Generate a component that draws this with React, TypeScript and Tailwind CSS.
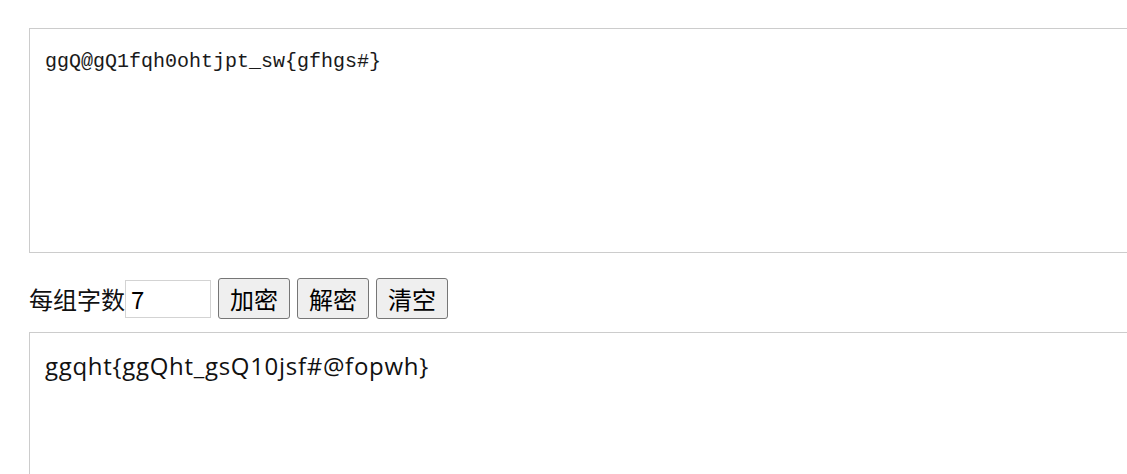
import React from 'react'

/* ── 分组加密 tool page ───────────────────── */

const cjk = '"Noto Sans CJK SC", "Noto Sans", sans-serif'

function Btn({ label }: { label: string }) {
  return (
    <button
      className="h-[41px] w-[72px] rounded-[3px] border border-[#767676] bg-[#efefef] text-[24px] leading-none text-black"
      style={{ fontFamily: cjk }}
    >
      {label}
    </button>
  )
}

export default function App() {
  return (
    <div className="w-[1127px] h-[474px] overflow-hidden bg-white pl-[29px] pt-[28px]">
      {/* input box */}
      <div className="w-[1200px] h-[225px] border border-[#cccccc] px-[15px] pt-[21px]">
        <div
          className="text-[20px] leading-[24px] text-[#1a1a1a]"
          style={{ fontFamily: '"Liberation Mono", monospace' }}
        >
          ggQ@gQ1fqh0ohtjpt_sw{'{'}gfhgs#{'}'}
        </div>
      </div>

      {/* controls */}
      <div className="mt-[25px] flex items-center" style={{ fontFamily: cjk }}>
        <span className="text-[24px] leading-none text-[#111]">每组字数</span>
        <div className="h-[38px] w-[86px] border border-[#d3d3d3] pl-[5px] flex items-center text-[24px] text-black">
          7
        </div>
        <div className="ml-[7px] flex gap-[7px]">
          <Btn label="加密" />
          <Btn label="解密" />
          <Btn label="清空" />
        </div>
      </div>

      {/* output box */}
      <div className="mt-[13px] w-[1200px] h-[200px] border border-[#cccccc] px-[15px] pt-[18px]">
        <div
          className="text-[24px] leading-[30px] tracking-[0.7px] text-[#111]"
          style={{ fontFamily: '"Open Sans", "Noto Sans CJK SC", sans-serif' }}
        >
          ggqht{'{'}ggQht_gsQ10jsf#@fopwh{'}'}
        </div>
      </div>
    </div>
  )
}
